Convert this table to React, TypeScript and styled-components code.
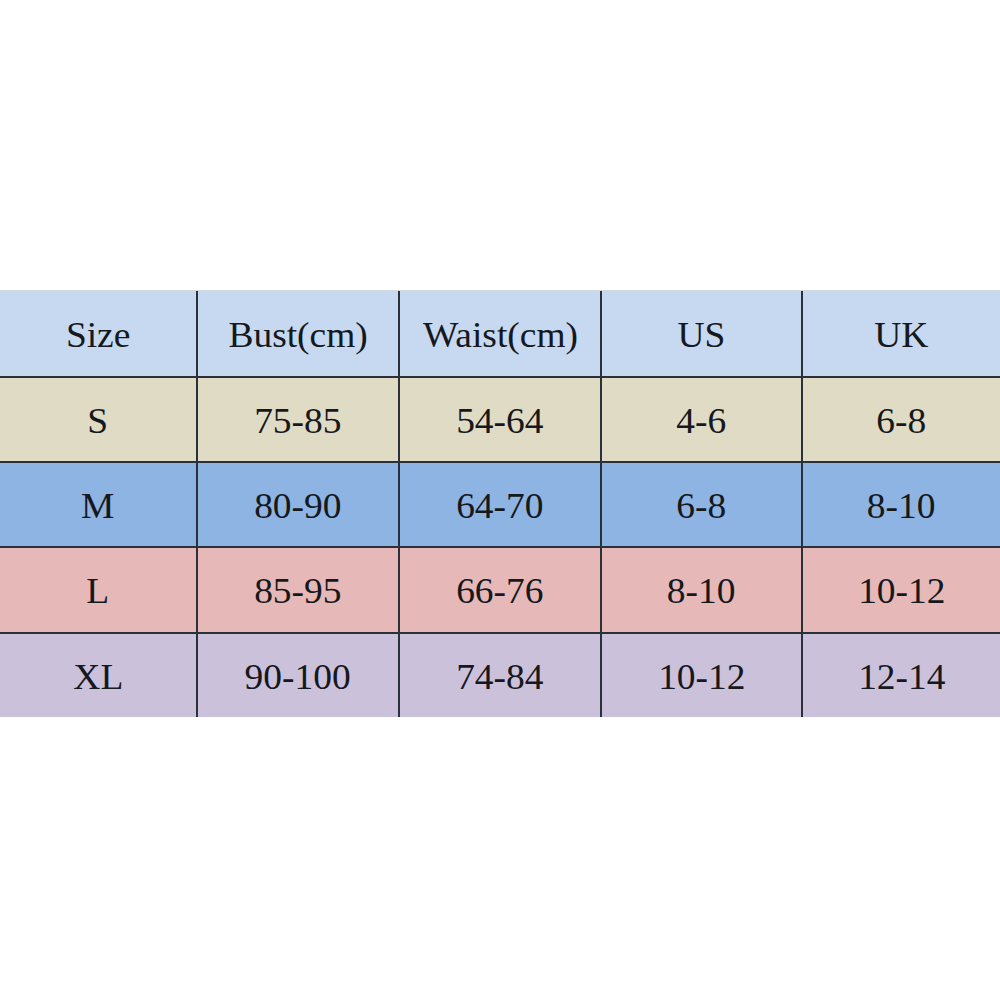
import React from "react";
import styled, { createGlobalStyle } from "styled-components";

const Global = createGlobalStyle`
  html, body { margin: 0; padding: 0; background: #ffffff; }
  body { width: 1000px; height: 1000px; overflow: hidden; }
`;

const Page = styled.div`
  width: 1000px;
  height: 1000px;
  padding-top: 290px;
  box-sizing: border-box;
  background: #ffffff;
`;

const Table = styled.div`
  display: grid;
  grid-template-columns: 198px 202px 202px 201px 197px;
  grid-template-rows: 87px 85px 85px 86px 83px;
  border-top: 1px solid #d4d8de;
`;

const Cell = styled.div<{ $bg: string; $last: boolean; $bottom: boolean }>`
  background: ${(p) => p.$bg};
  border-right: ${(p) => (p.$last ? "none" : "2px solid #2b313b")};
  border-bottom: ${(p) => (p.$bottom ? "none" : "2px solid #2b313b")};
  display: flex;
  align-items: center;
  justify-content: center;
  padding-top: 4px;
  box-sizing: border-box;
  font-family: "Liberation Serif", "Times New Roman", serif;
  font-size: 35px;
  color: #15181c;
`;

const Label = styled.span`
  display: inline-block;
  transform: scaleX(1.07);
  white-space: nowrap;
`;

const rows: { bg: string; cells: string[] }[] = [
  { bg: "#c6d9f0", cells: ["Size", "Bust(cm)", "Waist(cm)", "US", "UK"] },
  { bg: "#dfdbc5", cells: ["S", "75-85", "54-64", "4-6", "6-8"] },
  { bg: "#8db4e2", cells: ["M", "80-90", "64-70", "6-8", "8-10"] },
  { bg: "#e6b9b8", cells: ["L", "85-95", "66-76", "8-10", "10-12"] },
  { bg: "#ccc1db", cells: ["XL", "90-100", "74-84", "10-12", "12-14"] },
];

export default function App() {
  return (
    <Page>
      <Global />
      <Table>
        {rows.map((r, ri) =>
          r.cells.map((c, ci) => (
            <Cell
              key={`${ri}-${ci}`}
              $bg={r.bg}
              $last={ci === r.cells.length - 1}
              $bottom={ri === rows.length - 1}
            >
              <Label>{c}</Label>
            </Cell>
          ))
        )}
      </Table>
    </Page>
  );
}
